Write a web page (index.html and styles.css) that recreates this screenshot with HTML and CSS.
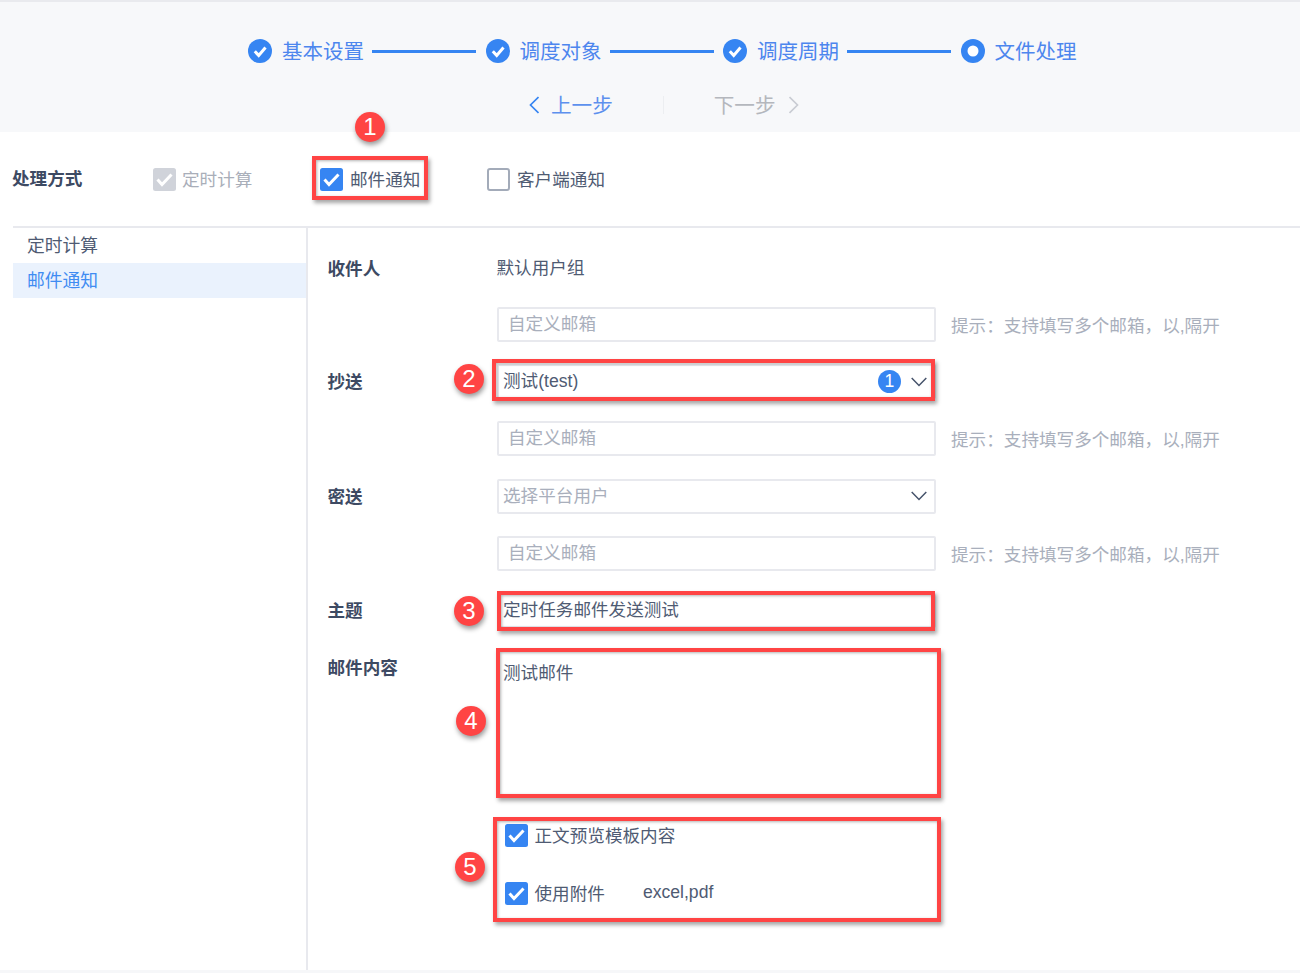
FILE: index.html
```html
<!DOCTYPE html>
<html lang="zh-CN">
<head>
<meta charset="utf-8">
<title>文件处理</title>
<link rel="stylesheet" href="styles.css">
</head>
<body>
<div class="page">
  <header class="head">
    <div class="steps">
      <svg class="step-icon" viewBox="0 0 24 24"><circle cx="12" cy="12" r="12" fill="#3685f2"/><path d="M6.800 12.300l3.900 4.100 6.800-7.900" fill="none" stroke="#fff" stroke-width="3"/></svg>
      <span class="step-text">基本设置</span><i class="step-line"></i>
      <svg class="step-icon" viewBox="0 0 24 24"><circle cx="12" cy="12" r="12" fill="#3685f2"/><path d="M6.800 12.300l3.900 4.100 6.800-7.900" fill="none" stroke="#fff" stroke-width="3"/></svg>
      <span class="step-text">调度对象</span><i class="step-line"></i>
      <svg class="step-icon" viewBox="0 0 24 24"><circle cx="12" cy="12" r="12" fill="#3685f2"/><path d="M6.800 12.300l3.900 4.100 6.800-7.900" fill="none" stroke="#fff" stroke-width="3"/></svg>
      <span class="step-text">调度周期</span><i class="step-line"></i>
      <svg class="step-icon" viewBox="0 0 24 24"><circle cx="12" cy="12" r="12" fill="#3685f2"/><circle cx="12" cy="12" r="5.500" fill="#fff"/></svg>
      <span class="step-text">文件处理</span>
    </div>
    <div class="nav">
      <div class="nav-prev">
        <svg class="chev" viewBox="0 0 10 18"><path d="M9.500 1L1.500 9l8 8" fill="none" stroke="#3685f2" stroke-width="1.700"/></svg>
        <span>上一步</span>
      </div>
      <i class="nav-sep"></i>
      <div class="nav-next">
        <span>下一步</span>
        <svg class="chev" viewBox="0 0 10 18"><path d="M.500 1l8 8-8 8" fill="none" stroke="#c9ccd3" stroke-width="1.700"/></svg>
      </div>
    </div>
  </header>

  <section class="mode">
    <div class="mode-title">处理方式</div>
    <label class="check muted first">
      <svg class="box" viewBox="0 0 23 23"><rect width="23" height="23" rx="2.500" fill="#d0d3da"/><path d="M4.500 11.500l4.500 5 9.500-10" fill="none" stroke="#fff" stroke-width="3"/></svg>
      <span>定时计算</span>
    </label>
    <label class="check second">
      <svg class="box" viewBox="0 0 23 23"><rect width="23" height="23" rx="2.500" fill="#3685f2"/><path d="M4.500 11.500l4.500 5 9.500-10" fill="none" stroke="#fff" stroke-width="3"/></svg>
      <span>邮件通知</span>
    </label>
    <label class="check third">
      <span class="box-empty"></span>
      <span>客户端通知</span>
    </label>
  </section>

  <main class="body">
    <nav class="side">
      <div class="side-item">定时计算</div>
      <div class="side-item active">邮件通知</div>
    </nav>
    <form class="form">
      <div class="row row-top">
        <div class="label">收件人</div>
        <div class="static">默认用户组</div>
      </div>
      <div class="row">
        <div class="label"></div>
        <div class="field placeholder">自定义邮箱</div>
        <div class="hint">提示：支持填写多个邮箱，以,隔开</div>
      </div>
      <div class="row">
        <div class="label">抄送</div>
        <div class="field select">
          <span class="grow">测试(test)</span>
          <span class="count">1</span>
          <svg class="arrow" viewBox="0 0 16 10"><path d="M.700 1L8 8.500 15.300 1" fill="none" stroke="#46536b" stroke-width="1.500"/></svg>
        </div>
      </div>
      <div class="row">
        <div class="label"></div>
        <div class="field placeholder">自定义邮箱</div>
        <div class="hint">提示：支持填写多个邮箱，以,隔开</div>
      </div>
      <div class="row">
        <div class="label">密送</div>
        <div class="field select ph-select">
          <span class="grow">选择平台用户</span>
          <svg class="arrow" viewBox="0 0 16 10"><path d="M.700 1L8 8.500 15.300 1" fill="none" stroke="#46536b" stroke-width="1.500"/></svg>
        </div>
      </div>
      <div class="row">
        <div class="label"></div>
        <div class="field placeholder">自定义邮箱</div>
        <div class="hint">提示：支持填写多个邮箱，以,隔开</div>
      </div>
      <div class="row">
        <div class="label">主题</div>
        <div class="field select"><span class="grow">定时任务邮件发送测试</span></div>
      </div>
      <div class="row-area">
        <div class="label">邮件内容</div>
        <div class="area">测试邮件</div>
      </div>
      <div class="row row-first-check">
        <div class="label"></div>
        <label class="check indent">
          <svg class="box" viewBox="0 0 23 23"><rect width="23" height="23" rx="2.500" fill="#3685f2"/><path d="M4.500 11.500l4.500 5 9.500-10" fill="none" stroke="#fff" stroke-width="3"/></svg>
          <span>正文预览模板内容</span>
        </label>
      </div>
      <div class="row row-last-check">
        <div class="label"></div>
        <label class="check indent">
          <svg class="box" viewBox="0 0 23 23"><rect width="23" height="23" rx="2.500" fill="#3685f2"/><path d="M4.500 11.500l4.500 5 9.500-10" fill="none" stroke="#fff" stroke-width="3"/></svg>
          <span>使用附件</span>
          <span class="types">excel,pdf</span>
        </label>
      </div>
    </form>
  </main>

  <div class="mark mark-1"></div>
  <div class="mark mark-2"></div>
  <div class="mark mark-3"></div>
  <div class="mark mark-4"></div>
  <div class="mark mark-5"></div>
  <div class="pin pin-1">1</div>
  <div class="pin pin-2">2</div>
  <div class="pin pin-3">3</div>
  <div class="pin pin-4">4</div>
  <div class="pin pin-5">5</div>
</div>
</body>
</html>
```
FILE: styles.css
```css
* { box-sizing: border-box; }
html, body { margin: 0; padding: 0; }
body {
  background: #fff;
  color: #4f5b73;
  font-family: "Liberation Sans", "Noto Sans CJK SC", sans-serif;
  font-size: 17.6px;
}
.page {
  position: relative;
  width: 1300px;
  height: 973px;
  overflow: hidden;
  display: flex;
  flex-direction: column;
  border-bottom: 3px solid #f6f7f9;
}
.head {
  height: 132px;
  flex: none;
  background: #f7f8fa;
  border-top: 2px solid #e9eaee;
}
.steps {
  display: flex;
  align-items: center;
  height: 24px;
  margin-top: 37px;
  padding-left: 248px;
}
.step-icon { width: 24px; height: 24px; flex: none; }
.step-text {
  margin: 2px 0 0 10px;
  width: 82px;
  font-size: 20.5px;
  line-height: 24px;
  color: #4d86ee;
  white-space: nowrap;
}
.step-line {
  width: 104px;
  height: 3px;
  margin: 1px 9.500px 0 8px;
  background: #3685f2;
}
.nav {
  display: flex;
  align-items: center;
  height: 24px;
  margin-top: 30px;
  padding-left: 529px;
  font-size: 20.6px;
}
.nav span { margin-bottom: 2px; }
.chev { width: 10px; height: 18px; flex: none; }
.nav-prev, .nav-next { display: flex; align-items: center; white-space: nowrap; }
.nav-prev { color: #5d90ee; gap: 12px; }
.nav-next { color: #b4b7bd; gap: 13px; }
.nav-sep {
  width: 1px;
  height: 18px;
  margin: 0 50px;
  background: #eceef1;
}
.mode {
  height: 94px;
  flex: none;
  display: flex;
  align-items: center;
  padding-left: 12px;
}
.mode-title {
  width: 141px;
  margin-bottom: 3px;
  font-weight: 700;
  color: #3d4a63;
}
.check {
  display: flex;
  align-items: center;
  gap: 7px;
  white-space: nowrap;
}
.check span:not(.box-empty) { margin-bottom: 2px; }
.box { width: 23px; height: 23px; flex: none; }
.box-empty {
  width: 23px;
  height: 23px;
  border: 2px solid #a3abb9;
  border-radius: 3px;
  background: #fff;
}
.muted { color: #a9aeb9; }
.first { width: 167px; gap: 6px; }
.second { width: 167px; }
.body {
  flex: 1;
  display: flex;
  margin-left: 13px;
  border-top: 2px solid #e8e9ee;
}
.side {
  width: 295px;
  flex: none;
  border-right: 2px solid #e8e9ee;
  font-size: 17.8px;
}
.side-item {
  height: 35px;
  line-height: 37px;
  padding-left: 14px;
}
.side-item.active {
  background: #eaf2fd;
  color: #3f8cf2;
}
.form {
  flex: 1;
  padding: 10.400px 0 0 20px;
}
.row {
  height: 57.300px;
  display: flex;
  align-items: center;
}
.label {
  width: 169.500px;
  flex: none;
  margin-left: -.5px;
  font-weight: 700;
  color: #3d4a63;
}
.row .label { padding-bottom: 2px; }
.row-top .label { padding: 0; }
.static { margin: 0 0 2px -.5px; color: #4f5b73; }
.field {
  width: 439px;
  height: 35px;
  flex: none;
  display: flex;
  align-items: center;
  background: #fff;
  border: 2px solid #e8e9ee;
  border-radius: 2px;
  white-space: nowrap;
}
.placeholder { padding: 0 0 4px 9px; color: #a9afbc; }
.select { padding: 0 7px 0 4px; }
.ph-select { color: #a9afbc; }
.grow { flex: 1; margin-bottom: 4px; }
.count {
  width: 23px;
  height: 23px;
  margin-right: 10px;
  border-radius: 50%;
  background: #3685f2;
  color: #fff;
  font-size: 17.600px;
  line-height: 23px;
  text-align: center;
}
.arrow { width: 16px; height: 10px; flex: none; }
.hint {
  margin-left: 15px;
  color: #a9afbc;
  white-space: nowrap;
}
.row-area {
  display: flex;
  height: 145px;
  margin-top: 10.500px;
}
.row-area .label { padding-top: 6px; line-height: 24px; }
.area {
  width: 439px;
  height: 145px;
  padding: 11px 6px;
  line-height: 24px;
}
.row-first-check { margin-top: 12.200px; }
.row-last-check { margin-top: .5px; }
.indent { margin-left: 7.500px; }
.check .types { margin: 0 0 -6px 31px; }
.mark {
  position: absolute;
  border: 4px solid #ff4444;
  box-shadow: 2px 3px 4px rgba(0, 0, 0, .35), inset 1px 1px 3px rgba(0, 0, 0, .3);
}
.mark-1 { left: 312px; top: 156px; width: 116px; height: 44px; }
.mark-2 { left: 492px; top: 359px; width: 443px; height: 42px; }
.mark-3 { left: 497px; top: 591px; width: 438px; height: 40px; }
.mark-4 { left: 496px; top: 648px; width: 445px; height: 150px; }
.mark-5 { left: 493px; top: 817px; width: 448px; height: 105px; }
.pin {
  position: absolute;
  width: 30px;
  height: 30px;
  border-radius: 50%;
  background: #ff4444;
  color: #fff;
  font-size: 24px;
  line-height: 29px;
  text-align: center;
  box-shadow: 1px 3px 5px rgba(0, 0, 0, .4);
}
.pin-1 { left: 355px; top: 112px; }
.pin-2 { left: 454px; top: 364px; }
.pin-3 { left: 454px; top: 596px; }
.pin-4 { left: 456px; top: 706px; }
.pin-5 { left: 455px; top: 852px; }
```
